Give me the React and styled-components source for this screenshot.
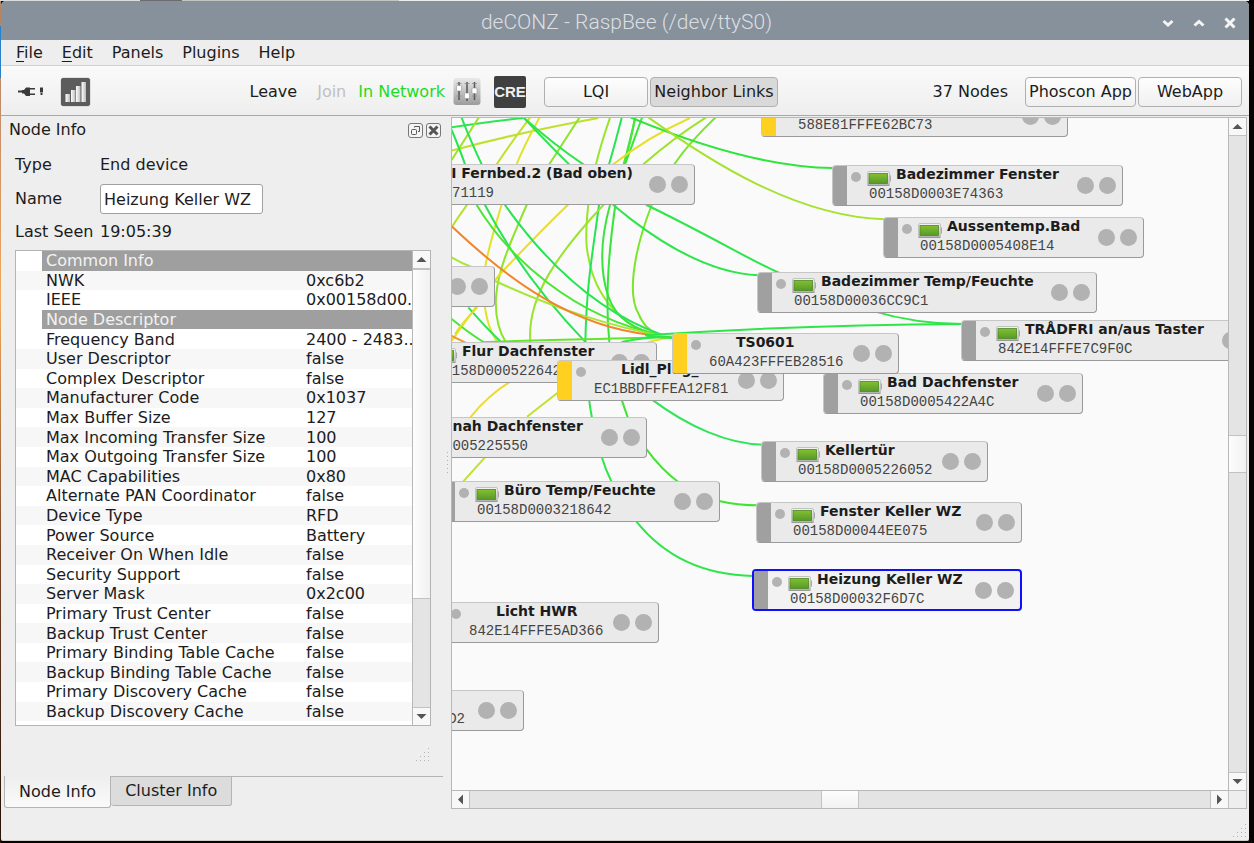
import { useState } from "react";
import styled, { createGlobalStyle, css } from "styled-components";

const INFO_ROWS = [
  { section: "Common Info" },
  { name: "NWK", value: "0xc6b2" },
  { name: "IEEE", value: "0x00158d00.." },
  { section: "Node Descriptor" },
  { name: "Frequency Band", value: "2400 - 2483.." },
  { name: "User Descriptor", value: "false" },
  { name: "Complex Descriptor", value: "false" },
  { name: "Manufacturer Code", value: "0x1037" },
  { name: "Max Buffer Size", value: "127" },
  { name: "Max Incoming Transfer Size", value: "100" },
  { name: "Max Outgoing Transfer Size", value: "100" },
  { name: "MAC Capabilities", value: "0x80" },
  { name: "Alternate PAN Coordinator", value: "false" },
  { name: "Device Type", value: "RFD" },
  { name: "Power Source", value: "Battery" },
  { name: "Receiver On When Idle", value: "false" },
  { name: "Security Support", value: "false" },
  { name: "Server Mask", value: "0x2c00" },
  { name: "Primary Trust Center", value: "false" },
  { name: "Backup Trust Center", value: "false" },
  { name: "Primary Binding Table Cache", value: "false" },
  { name: "Backup Binding Table Cache", value: "false" },
  { name: "Primary Discovery Cache", value: "false" },
  { name: "Backup Discovery Cache", value: "false" },
  { name: "Network Manager", value: "false" },
];

// x / y are scene coordinates, nodes further down the list are painted on top
const NODES = [
  { x: 309, y: -22, w: 307, router: true, name: "", address: "588E81FFFE62BC73" },
  { x: -47, y: 46, w: 290, name: "I Fernbed.2 (Bad oben)", address: "071119", cut: true, nameEnd: 182, addressEnd: 43 },
  { x: 380, y: 47, w: 291, battery: true, name: "Badezimmer Fenster", address: "00158D0003E74363" },
  { x: 431, y: 99, w: 261, battery: true, name: "Aussentemp.Bad", address: "00158D0005408E14" },
  { x: 305, y: 154, w: 340, battery: true, name: "Badezimmer Temp/Feuchte", address: "00158D00036CC9C1" },
  { x: -184, y: 148, w: 227, name: "", address: "" },
  { x: 509, y: 202, w: 307, battery: true, name: "TRÅDFRI an/aus Taster", address: "842E14FFFE7C9F0C" },
  { x: -54, y: 224, w: 259, battery: true, name: "Flur Dachfenster", address: "00158D0005226420" },
  { x: 371, y: 255, w: 260, battery: true, name: "Bad Dachfenster", address: "00158D0005422A4C" },
  { x: 105, y: 242, w: 227, router: true, name: "Lidl_Plug_", address: "EC1BBDFFFEA12F81" },
  { x: 220, y: 215, w: 227, router: true, name: "TS0601", address: "60A423FFFEB28516" },
  { x: -95, y: 299, w: 290, name: "nah Dachfenster", address: "005225550", cut: true, nameEnd: 132, addressEnd: 77 },
  { x: 309, y: 323, w: 227, battery: true, name: "Kellertür", address: "00158D0005226052" },
  { x: -12, y: 363, w: 280, battery: true, name: "Büro Temp/Feuchte", address: "00158D0003218642" },
  { x: 304, y: 384, w: 266, battery: true, name: "Fenster Keller WZ", address: "00158D00044EE075" },
  { x: 300, y: 451, w: 270, battery: true, name: "Heizung Keller WZ", address: "00158D00032F6D7C", selected: true },
  { x: -20, y: 484, w: 227, name: "Licht HWR", address: "842E14FFFE5AD366" },
  { x: -155, y: 572, w: 227, name: "", address: "D2", cut: true, nameEnd: 0, addressEnd: 14 },
];

// neighbor links, drawn at three units per scene pixel
const LINKS = [
  ["#2ee550", "M20 52 Q120 36 235 24"],
  ["#bfe02e", "M20 122 Q220 68 460 24"],
  ["#a0e22a", "M20 150 L103 20"],
  ["#c4e02a", "M257 20 Q190 110 155 163"],
  ["#dfe32a", "M285 20 Q235 110 210 175 C180 240 120 440 117 500 C112 590 125 650 157 696"],
  ["#8fe32b", "M405 20 Q350 105 313 163 L245 285 C190 410 160 480 153 560 C150 610 160 660 182 696"],
  ["#99e52a", "M496 20 Q465 110 450 175 C430 250 415 380 430 440 C450 560 530 650 640 678"],
  ["#27e452", "M531 20 Q505 120 492 163 L462 285 C440 450 425 520 421 696"],
  ["#38e53a", "M572 20 Q550 110 537 163 L495 285 C460 410 470 500 490 560 C515 630 570 660 650 676"],
  ["#38e53a", "M592 20 Q560 110 540 163 L511 285 C490 430 480 570 493 696"],
  ["#4be535", "M570 20 Q560 90 536 163"],
  ["#e6df2a", "M735 24 Q610 80 505 163 L368 285 Q270 380 160 498 L20 692"],
  ["#9be32c", "M787 20 Q690 80 595 163 L475 285 C340 430 245 560 256 696"],
  ["#7be52c", "M814 20 Q730 100 688 163 L620 285 C560 440 550 560 580 610 Q600 660 640 672"],
  ["#27e452", "M50 24 Q80 100 110 163 L180 285 C290 440 440 600 650 674"],
  ["#27e452", "M20 60 Q45 120 60 163 L120 285 C190 420 290 560 425 700"],
  ["#4be535", "M95 285 C190 440 380 620 650 676"],
  ["#b6e02a", "M67 283 Q40 320 20 352"],
  ["#a8e635", "M20 442 Q50 460 78 470 M150 513 C340 600 500 650 680 684"],
  ["#f0852c", "M20 349 C190 510 380 650 620 675"],
  ["#4be535", "M20 627 Q70 668 118 698"],
  ["#2ee550", "M70 592 Q120 650 168 696"],
  ["#e6df2a", "M97 592 Q50 640 30 672"],
  ["#ef9a2a", "M20 678 L66 700"],
  ["#62e72d", "M110 697 C300 688 480 688 690 680"],
  ["#2ee550", "M530 696 Q600 680 690 680"],
  ["#e6df2a", "M600 700 Q640 686 690 682"],
  ["#2ee54a", "M600 676 C900 655 1200 644 1552 642"],
  ["#2ee54a", "M604 677 Q650 684 690 684"],
  ["#2ee54a", "M235 22 C420 220 680 484 940 496"],
  ["#2ee54a", "M235 22 C300 80 350 120 415 163 C480 205 545 250 605 285 C800 380 930 458 995 485 C1130 540 1290 642 1552 642"],
  ["#2ee53a", "M556 22 C720 90 960 172 1164 174"],
  ["#a4e22f", "M610 22 C790 150 1050 320 1320 328"],
  ["#ecdc2e", "M196 815 Q130 855 76 922"],
  ["#c0e22e", "M338 848 L246 920 M122 1040 L55 1114"],
  ["#2ee54a", "M432 866 Q436 900 441 924 M470 1040 Q482 1080 500 1116 M572 1232 Q700 1394 925 1398"],
  ["#3fe52e", "M529 866 Q538 894 549 924 M603 1016 Q650 1080 700 1116 M818 1172 Q880 1186 940 1186"],
  ["#2ee55a", "M620 868 C730 950 850 1003 955 1004"],
];

const App = () => {
  const [name, setName] = useState("Heizung Keller WZ");

  return (
    <>
      <GlobalStyle />
      <Desktop>
        <Window>
          <TitleBar>
            <Title>deCONZ - RaspBee (/dev/ttyS0)</Title>
            <WindowButtons>
              <WindowButton aria-label="Minimize">
                <svg width="12" height="12" viewBox="0 0 12 12">
                  <path d="M1.500 4 6 8l4.500-4" />
                </svg>
              </WindowButton>
              <WindowButton aria-label="Maximize">
                <svg width="12" height="12" viewBox="0 0 12 12">
                  <path d="M1.500 8.500 6 4.500l4.500 4" />
                </svg>
              </WindowButton>
              <WindowButton aria-label="Close">
                <svg width="12" height="12" viewBox="0 0 12 12">
                  <path d="m1.500 1.500 9 9m0-9-9 9" />
                </svg>
              </WindowButton>
            </WindowButtons>
          </TitleBar>

          <MenuBar>
            <MenuItem>
              <u>F</u>ile
            </MenuItem>
            <MenuItem>
              <u>E</u>dit
            </MenuItem>
            <MenuItem>Panels</MenuItem>
            <MenuItem>Plugins</MenuItem>
            <MenuItem>Help</MenuItem>
          </MenuBar>

          <ToolBar>
            <IconButton aria-label="Connection" $width={28}>
              <PlugIcon />
            </IconButton>
            <SignalButton aria-label="Signal strength">
              <SignalIcon />
            </SignalButton>
            <NetworkActions>
              <TextButton>Leave</TextButton>
              <TextButton disabled>Join</TextButton>
              <NetworkState>In Network</NetworkState>
            </NetworkActions>
            <IconButton aria-label="Settings" $width={28}>
              <SlidersIcon />
            </IconButton>
            <CreButton>CRE</CreButton>
            <ButtonPair>
              <PushButton>LQI</PushButton>
              <PushButton $pressed $wide>
                Neighbor Links
              </PushButton>
            </ButtonPair>
            <NodeCount>37 Nodes</NodeCount>
            <ButtonPair>
              <PushButton>Phoscon App</PushButton>
              <PushButton>WebApp</PushButton>
            </ButtonPair>
          </ToolBar>

          <Main>
            <Dock>
              <DockHeader>
                <DockTitle>Node Info</DockTitle>
                <DockButton aria-label="Float panel">
                  <svg width="13" height="13" viewBox="0 0 13 13">
                    <rect x="2.500" y="5.500" width="5" height="5" rx="1" />
                    <path d="M5.500 3.500v-1h5v5h-1.500" />
                  </svg>
                </DockButton>
                <DockButton aria-label="Close panel" $bold>
                  <svg width="13" height="13" viewBox="0 0 13 13">
                    <path d="m2.500 2.500 8 8m0-8-8 8" />
                  </svg>
                </DockButton>
              </DockHeader>

              <Form>
                <span>Type</span>
                <span>End device</span>
                <label htmlFor="node-name">Name</label>
                <NameInput
                  id="node-name"
                  value={name}
                  onChange={(e) => setName(e.target.value)}
                />
                <span>Last Seen</span>
                <span>19:05:39</span>
              </Form>

              <Tree>
                <TreeViewport>
                  <InfoTable>
                    <colgroup>
                      <col width="26" />
                      <col width="260" />
                      <col />
                    </colgroup>
                    <tbody>
                      {INFO_ROWS.map((row) =>
                        row.section ? (
                          <SectionRow key={row.section}>
                            <td />
                            <th colSpan="2">{row.section}</th>
                          </SectionRow>
                        ) : (
                          <InfoRow key={row.name}>
                            <td />
                            <td>{row.name}</td>
                            <td>{row.value}</td>
                          </InfoRow>
                        )
                      )}
                    </tbody>
                  </InfoTable>
                </TreeViewport>
                <ScrollBar before={0} size={329} after={109} />
              </Tree>

              <GripRow>
                <Grip />
              </GripRow>

              <Tabs>
                <Tab $active>Node Info</Tab>
                <Tab>Cluster Info</Tab>
              </Tabs>
            </Dock>

            <Splitter>
              <svg width="3" height="22" viewBox="0 0 3 22">
                {[0, 4, 8, 12, 16, 20].map((y) => (
                  <rect key={y} x="0" y={y} width="1" height="1" fill="#b0b0b0" />
                ))}
              </svg>
            </Splitter>

            <SceneFrame>
              <Scene>
                <Links>
                  <g transform="translate(-7 -8) scale(0.33333)">
                    {LINKS.map(([color, d]) => (
                      <path key={d} d={d} stroke={color} />
                    ))}
                  </g>
                </Links>
                {NODES.map((node) => (
                  <GraphNode key={node.x + "/" + node.y} node={node} />
                ))}
              </Scene>
              <ScrollBar before={300} size={36} after={300} fixed />
              <ScrollBar horizontal before={352} size={36} after={352} fixed />
              <Corner />
            </SceneFrame>
          </Main>

          <StatusBar>
            <Grip />
          </StatusBar>
        </Window>
      </Desktop>
    </>
  );
};

export default App;

const GraphNode = ({ node }) => (
  <NodeBox
    $selected={node.selected}
    style={{ left: node.x, top: node.y, width: node.w }}
  >
    <NodeStrip $router={node.router} />
    {node.cut ? (
      <CutBody>
        <NodeName style={{ width: node.nameEnd - node.x - 16 }}>
          {node.name}
        </NodeName>
        <NodeAddress style={{ width: node.addressEnd - node.x - 16 }}>
          {node.address}
        </NodeAddress>
      </CutBody>
    ) : (
      <NodeBody>
        <NodeHead>
          <NodeDot />
          <BatterySlot>{node.battery && <BatteryIcon />}</BatterySlot>
          <NodeName>{node.name}</NodeName>
        </NodeHead>
        <NodeAddress>{node.address}</NodeAddress>
      </NodeBody>
    )}
    <NodeLights>
      <NodeLight />
      <NodeLight />
    </NodeLights>
  </NodeBox>
);

const ScrollBar = ({ horizontal, before, size, after, fixed }) => (
  <Bar $horizontal={horizontal}>
    <BarButton aria-label={horizontal ? "Scroll left" : "Scroll up"}>
      <Arrow turn={horizontal ? 270 : 0} />
    </BarButton>
    <Track $horizontal={horizontal} style={{ flexGrow: before }} />
    <Thumb
      $horizontal={horizontal}
      style={fixed ? { flexBasis: size } : { flexGrow: size }}
    />
    <Track $horizontal={horizontal} style={{ flexGrow: after }} />
    <BarButton aria-label={horizontal ? "Scroll right" : "Scroll down"}>
      <Arrow turn={horizontal ? 90 : 180} />
    </BarButton>
  </Bar>
);

const Arrow = ({ turn }) => (
  <svg width="11" height="11" viewBox="0 0 11 11">
    <path
      d="M0.500 8 5.500 3l5 5z"
      fill="#555"
      transform={`rotate(${turn} 5.5 5.5)`}
    />
  </svg>
);

const Grip = () => (
  <svg width="14" height="14" viewBox="0 0 14 14" fill="#b4b4b4">
    {[0, 1, 2, 3].map((row) =>
      [0, 1, 2, 3]
        .filter((col) => col + row >= 3)
        .map((col) => (
          <rect
            key={col}
            x={col * 4}
            y={row * 4}
            width="1"
            height="1"
          />
        ))
    )}
  </svg>
);

const PlugIcon = () => (
  <svg width="28" height="12" viewBox="0 0 28 12" fill="#3a3a3a">
    <rect x="1" y="4.500" width="6" height="2" />
    <path d="M5 4h2l2-2.500h4v8.500H9L7 7.500H5z" />
    <rect x="13" y="2" width="5" height="1.500" />
    <rect x="13" y="7.500" width="5" height="1.500" />
    <rect x="23" y="1.500" width="3" height="5" />
    <rect x="23.500" y="7" width="2" height="2" />
  </svg>
);

const SignalIcon = () => (
  <svg width="29" height="28" viewBox="0 0 29 28">
    <defs>
      <linearGradient id="bar" x1="0" x2="1">
        <stop offset="0" stopColor="#fff" />
        <stop offset="1" stopColor="#bbb" />
      </linearGradient>
    </defs>
    <g fill="url(#bar)">
      <rect x="4.500" y="16" width="4.500" height="8" />
      <rect x="10" y="12" width="4.500" height="12" />
      <rect x="15" y="8" width="4.500" height="16" />
      <rect x="20.500" y="4" width="4.500" height="20" />
    </g>
  </svg>
);

const SlidersIcon = () => (
  <svg width="28" height="29" viewBox="0 0 28 29">
    <defs>
      <linearGradient id="plate" x1="0" y1="0" x2="0" y2="1">
        <stop offset="0" stopColor="#e9e9e9" />
        <stop offset="1" stopColor="#9c9c9c" />
      </linearGradient>
    </defs>
    <rect x="0.500" y="1" width="27" height="27" rx="3" fill="url(#plate)" />
    <path
      d="M6 5v18M14 5v19M21.500 5v18"
      stroke="#555"
      strokeWidth="1.500"
    />
    <path
      d="M3.500 6.500h5M3.500 19h5M11.500 6.500h5M19 6.500h5M19 19h5"
      stroke="#888"
      strokeWidth="0.800"
    />
    <g fill="#fff" stroke="#888" strokeWidth="0.500">
      <rect x="3.500" y="8.500" width="5" height="5.500" rx="1" />
      <rect x="11.500" y="16" width="5" height="5.500" rx="1" />
      <rect x="19" y="11" width="5" height="5.500" rx="1" />
    </g>
  </svg>
);

const BatteryIcon = () => (
  <svg width="25" height="15" viewBox="0 0 25 15">
    <defs>
      <linearGradient id="charge" x1="0" y1="0" x2="0" y2="1">
        <stop offset="0" stopColor="#83c02e" />
        <stop offset="1" stopColor="#57992a" />
      </linearGradient>
      <linearGradient id="shell" x1="0" y1="0" x2="0" y2="1">
        <stop offset="0" stopColor="#f4f4f4" />
        <stop offset="1" stopColor="#b9b9b9" />
      </linearGradient>
    </defs>
    <rect
      x="0.500"
      y="0.500"
      width="22"
      height="14"
      rx="1.500"
      fill="url(#shell)"
      stroke="#c2c2c2"
    />
    <path d="M0.500 14.300h22" stroke="#8f8f8f" />
    <path d="M23.500 4.500v6" stroke="#a8a8a8" />
    <rect
      x="2"
      y="2.500"
      width="18.500"
      height="10"
      fill="url(#charge)"
      stroke="#4c8a22"
      strokeWidth="0.800"
    />
  </svg>
);

const GlobalStyle = createGlobalStyle`
  * {
    box-sizing: border-box;
  }

  body {
    margin: 0;
    background: #000;
    color: #1c1c1c;
    font: 16px/20px "DejaVu Sans", sans-serif;
  }

  button {
    padding: 0;
    border: none;
    background: none;
    color: inherit;
    font: inherit;
  }

  svg {
    display: block;
  }
`;

const Desktop = styled.div`
  display: flex;
  height: 100vh;
  padding: 1px 5px 2px 1px;
  background:
    linear-gradient(90deg, #ddd 140px, #6d6a70 140px 182px, #c4c4c0 182px 399px, #ececec 399px)
      0 0 / 1249px 1px no-repeat,
    linear-gradient(#b98463 0 26px, #2a80c8 26px 78px, #c08a6a 78px 96px, #f0a95c 300px, #7a4526 560px, #2a1608 800px)
      0 0 / 1px 100% no-repeat,
    #080402;
`;

const Window = styled.div`
  flex: 1;
  min-width: 0;
  display: flex;
  flex-direction: column;
  overflow: hidden;
  border-radius: 5px 5px 2px 2px;
  border-bottom: 1px solid #cfcfcf;
  background: #eeeeee;
`;

const TitleBar = styled.header`
  display: flex;
  align-items: center;
  height: 39px;
  padding: 0 13px 0 90px;
  background: #87919b;
`;

const Title = styled.h1`
  flex: 1;
  margin: 0;
  padding-top: 3px;
  text-align: center;
  font: 300 21px/24px Roboto, sans-serif;
  color: #dcdfe2;
`;

const WindowButtons = styled.div`
  display: flex;
  gap: 19px;
  padding-top: 4px;
`;

const WindowButton = styled.button`
  width: 12px;

  path {
    fill: none;
    stroke: #f5f5f5;
    stroke-width: 3;
  }
`;

const MenuBar = styled.nav`
  display: flex;
  align-items: center;
  gap: 19px;
  height: 26px;
  padding: 1px 15px 0;
  border-bottom: 1px solid #d2d2d2;
`;

const MenuItem = styled.button`
  u {
    text-underline-offset: 3px;
  }
`;

const ToolBar = styled.div`
  display: flex;
  align-items: center;
  height: 50px;
  padding: 2px 7px 0 16px;
  border-bottom: 1px solid #a8a8a8;
  background: linear-gradient(#fafafa, #eeeeee);
`;

const IconButton = styled.button`
  width: ${({ $width }) => $width}px;
  flex: none;
`;

const SignalButton = styled.button`
  margin-left: 16px;
  border-radius: 3px;
  background: #5c5c5c;
  box-shadow: 0 0 1px #333;
`;

const NetworkActions = styled.div`
  display: flex;
  width: 363px;
  padding-right: 8px;
  justify-content: flex-end;
`;

const TextButton = styled.button`
  margin-right: 20px;

  &:disabled {
    margin-right: 12px;
    color: #c0c0c0;
  }
`;

const NetworkState = styled.span`
  color: #1ddb1d;
`;

const CreButton = styled.button`
  width: 32px;
  height: 32px;
  margin: 0 18px 0 13px;
  overflow: hidden;
  border-radius: 2px;
  background: #404040;
  color: #eee;
  font: bold 15px/32px "Liberation Sans", sans-serif;
`;

const ButtonPair = styled.div`
  display: flex;
  gap: 2px;
`;

const PushButton = styled.button`
  min-width: ${({ $wide }) => ($wide ? 128 : 104)}px;
  height: 30px;
  padding: 0 3px;
  border: 1px solid #b0b0b0;
  border-radius: 4px;
  background: ${({ $pressed }) =>
    $pressed ? "#d9d9d9" : "linear-gradient(#fefefe, #f0f0f0)"};
  white-space: nowrap;
`;

const NodeCount = styled.span`
  margin: 0 17px 0 auto;
  white-space: nowrap;
`;

const Main = styled.main`
  flex: 1;
  min-height: 0;
  display: flex;
  padding-right: 2px;
`;

const Dock = styled.section`
  flex: none;
  width: 442px;
  display: flex;
  flex-direction: column;
  padding-bottom: 1px;
`;

const DockHeader = styled.div`
  display: flex;
  align-items: center;
  gap: 3px;
  height: 28px;
  padding: 0 2px 0 8px;
`;

const DockTitle = styled.h2`
  flex: 1;
  margin: 0;
  font-size: 16px;
  font-weight: normal;
`;

const DockButton = styled.button`
  width: 15px;
  height: 15px;
  border: 1px solid #777;
  border-radius: 3px;
  background: #f4f4f4;

  svg {
    fill: none;
    stroke: #555;
    stroke-width: ${({ $bold }) => ($bold ? 3 : 1)};
  }
`;

const Form = styled.div`
  display: grid;
  grid-template-columns: 85px 163px;
  grid-template-rows: 30px 30px 28px;
  row-gap: 4px;
  align-items: center;
  padding: 6px 14px 4px;
  white-space: nowrap;
`;

const NameInput = styled.input`
  width: 100%;
  height: 30px;
  padding: 0 3px;
  border: 1px solid #a0a0a0;
  border-radius: 3px;
  background: #fff;
  color: inherit;
  font: inherit;
  outline: none;
`;

const Tree = styled.div`
  flex: 1;
  min-height: 0;
  display: flex;
  margin: 0 12px 0 14px;
  border: 1px solid #b4b4b4;
  background: #fff;
`;

const TreeViewport = styled.div`
  flex: 1;
  min-width: 0;
  overflow: hidden;
`;

const InfoTable = styled.table`
  width: 100%;
  height: 490px;
  table-layout: fixed;
  border-collapse: collapse;
  line-height: 19px;

  td,
  th {
    padding: 0 0 0 4px;
    overflow: hidden;
    text-align: left;
    font-weight: normal;
    white-space: nowrap;
  }
`;

const InfoRow = styled.tr`
  &:nth-child(even) {
    background: #f7f7f7;
  }
`;

const SectionRow = styled.tr`
  th {
    background: #9f9f9f;
    color: #f2f2f2;
  }
`;

const GripRow = styled.div`
  display: flex;
  justify-content: flex-end;
  height: 50px;
  padding: 22px 13px 0 0;
`;

const Tabs = styled.div`
  display: flex;
  align-items: flex-start;
  height: 32px;
  margin-left: 3px;
  border-top: 1px solid #b4b4b4;
`;

const Tab = styled.button`
  height: 29px;
  padding: 0 14px;
  border: 1px solid #b4b4b4;
  border-top: none;
  border-left: none;
  border-radius: 0 0 3px 3px;
  background: #dcdcdc;

  ${({ $active }) =>
    $active &&
    css`
      height: 32px;
      margin-top: -1px;
      border-left: 1px solid #b4b4b4;
      background: linear-gradient(#eeeeee, #fafafa);
    `}
`;

const Splitter = styled.div`
  flex: none;
  width: 8px;
  display: flex;
  align-items: center;
  padding-left: 4px;
`;

const SceneFrame = styled.section`
  flex: 1;
  min-width: 0;
  display: grid;
  grid-template-columns: 1fr 18px;
  grid-template-rows: 1fr 18px;
  margin-top: 1px;
  border: 1px solid #b8b8b8;
`;

const Scene = styled.div`
  position: relative;
  overflow: hidden;
  background: #fafafa;
`;

const Links = styled.svg`
  width: 100%;
  height: 100%;

  path {
    fill: none;
    stroke-width: 6;
  }
`;

const Corner = styled.div`
  border-top: 1px solid #c0c0c0;
  border-left: 1px solid #c0c0c0;
`;

const NodeBox = styled.article`
  position: absolute;
  display: flex;
  height: 41px;
  overflow: hidden;
  border: 1px solid;
  border-color: #c6c6c6 #9a9a9a #9a9a9a #c6c6c6;
  border-radius: 4px;
  background: #eaeaea;

  ${({ $selected }) =>
    $selected &&
    css`
      height: 42px;
      border: 2px solid #1010ff;
      background: #f2f2f2;
    `}
`;

const NodeStrip = styled.span`
  flex: none;
  width: 14px;
  background: ${({ $router }) => ($router ? "#ffd020" : "#a0a0a0")};
`;

const NodeBody = styled.div`
  flex: 1;
  min-width: 0;
`;

const CutBody = styled(NodeBody)`
  text-align: right;
`;

const NodeHead = styled.div`
  display: flex;
  align-items: flex-start;
  height: 19px;
  padding-left: 4px;
`;

const NodeDot = styled.span`
  flex: none;
  width: 10px;
  height: 10px;
  margin: 6px 6px 0 0;
  border-radius: 50%;
  background: #b2b2b2;
`;

const BatterySlot = styled.span`
  flex: none;
  width: 29px;
  padding-top: 5px;
`;

const NodeName = styled.h3`
  height: 19px;
  margin: 0;
  font-size: 14px;
  font-weight: bold;
  line-height: 16px;
  white-space: nowrap;
`;

const NodeAddress = styled.div`
  padding-left: 22px;
  font: 14px/18px "Liberation Mono", monospace;
  color: #444;
`;

const NodeLights = styled.div`
  display: flex;
  align-items: center;
  gap: 5px;
  padding-right: 6px;
`;

const NodeLight = styled.span`
  width: 17px;
  height: 17px;
  border-radius: 50%;
  background: #b2b2b2;
`;

const Bar = styled.div`
  display: flex;
  flex: none;
  flex-direction: ${({ $horizontal }) => ($horizontal ? "row" : "column")};
  ${({ $horizontal }) => ($horizontal ? "height: 18px" : "width: 18px")};
  border: 0 solid #b8b8b8;
  border-width: ${({ $horizontal }) =>
    $horizontal ? "1px 0 0 0" : "0 0 0 1px"};
`;

const BarButton = styled.button`
  flex: none;
  display: flex;
  align-items: center;
  justify-content: center;
  width: 17px;
  height: 17px;
  background: #f8f8f8;
`;

const Track = styled.div`
  flex: 0 1 0px;
  border: 0 solid #c2c2c2;
  border-width: ${({ $horizontal }) => ($horizontal ? "0 1px" : "1px 0")};
  background: #e4e4e4;
`;

const Thumb = styled.div`
  flex: 0 0 0px;
  background: linear-gradient(
    ${({ $horizontal }) => ($horizontal ? "180deg" : "90deg")},
    #fdfdfd,
    #f1f1f1
  );
`;

const StatusBar = styled.footer`
  display: flex;
  justify-content: flex-end;
  align-items: flex-end;
  height: 31px;
  padding: 0 2px 2px;
`;
